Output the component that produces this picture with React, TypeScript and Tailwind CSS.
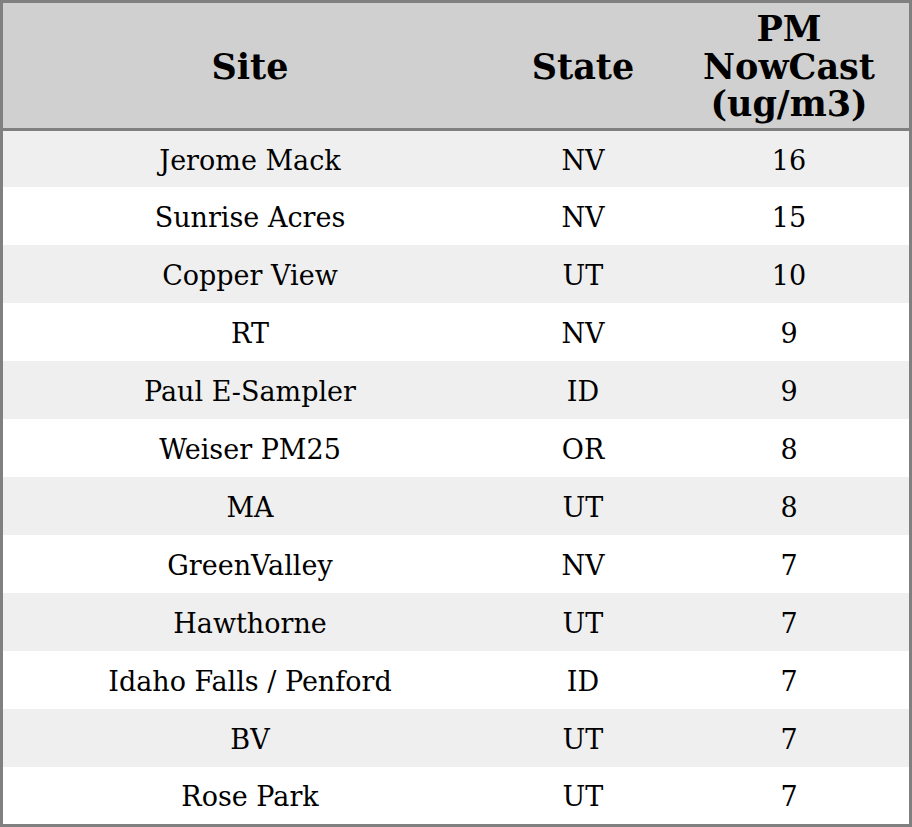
import React from "react";

const rows: [string, string, string][] = [
  ["Jerome Mack", "NV", "16"],
  ["Sunrise Acres", "NV", "15"],
  ["Copper View", "UT", "10"],
  ["RT", "NV", "9"],
  ["Paul E-Sampler", "ID", "9"],
  ["Weiser PM25", "OR", "8"],
  ["MA", "UT", "8"],
  ["GreenValley", "NV", "7"],
  ["Hawthorne", "UT", "7"],
  ["Idaho Falls / Penford", "ID", "7"],
  ["BV", "UT", "7"],
  ["Rose Park", "UT", "7"],
];

export default function App() {
  return (
    <div
      className="w-[912px] h-[827px] bg-white text-black"
      style={{ fontFamily: '"DejaVu Serif", serif' }}
    >
      <div className="w-[912px] h-[827px] border-[3px] border-[#808080] flex flex-col">
        <div className="h-[128px] shrink-0 bg-[#d0d0d0] border-b-[3px] border-[#808080] flex items-center pt-[2px] font-bold text-[35px] leading-[37.5px]">
          <div className="w-[494px] text-center">Site</div>
          <div className="w-[172px] text-center">State</div>
          <div className="w-[240px] text-center">
            PM
            <br />
            NowCast
            <br />
            (ug/m3)
          </div>
        </div>
        {rows.map((r, i) => (
          <div
            key={i}
            className={
              "flex items-center pt-[4px] text-[27px] " +
              (i % 2 === 0 ? "bg-[#efefef] " : "bg-white ") +
              (i === 0 ? "h-[56px]" : i === rows.length - 1 ? "h-[57px]" : "h-[58px]")
            }
          >
            <div className="w-[494px] text-center">{r[0]}</div>
            <div className="w-[172px] text-center">{r[1]}</div>
            <div className="w-[240px] text-center">{r[2]}</div>
          </div>
        ))}
      </div>
    </div>
  );
}
